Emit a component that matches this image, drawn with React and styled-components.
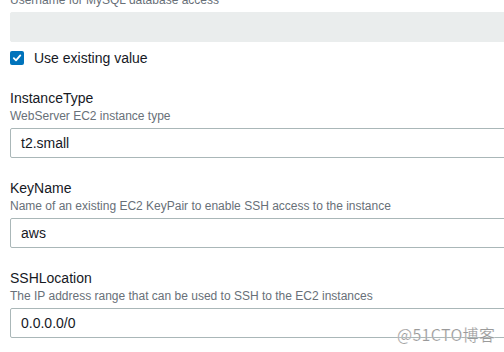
import React from "react";
import styled, { createGlobalStyle } from "styled-components";

const Global = createGlobalStyle`
  html, body { margin: 0; padding: 0; background: #ffffff; }
  body { width: 504px; height: 352px; overflow: hidden; position: relative; font-family: "Liberation Sans", Arial, sans-serif; }
`;

const Page = styled.div`
  margin-top: -8px;
  padding-left: 10px;
  display: flex;
  flex-direction: column;
`;

const Field = styled.div`
  display: flex;
  flex-direction: column;
  margin-top: ${(p) => p.$gap || 0}px;
`;

const Label = styled.div`
  font-size: 14px;
  line-height: 19px;
  color: #16191f;
`;

const Desc = styled.div`
  font-size: 12px;
  line-height: 16px;
  color: #687078;
`;

const Input = styled.div`
  box-sizing: border-box;
  margin-top: 4px;
  width: 530px;
  height: 30px;
  padding: 0 10px;
  display: flex;
  align-items: center;
  font-size: 14px;
  color: #16191f;
  background: ${(p) => (p.$disabled ? "#eaeded" : "#ffffff")};
  border: 1px solid ${(p) => (p.$disabled ? "#eaeded" : "#aab7b8")};
  border-radius: 2px;
`;

const CheckRow = styled.label`
  margin-top: 6px;
  height: 20px;
  display: flex;
  align-items: center;
  gap: 10px;
  font-size: 14px;
  color: #16191f;
`;

const Box = styled.span`
  width: 14px;
  height: 14px;
  border-radius: 2px;
  background: #0073bb;
  display: flex;
  align-items: center;
  justify-content: center;
`;

const Watermark = styled.div`
  position: absolute;
  left: 397px;
  top: 324px;
  font-family: "Noto Sans CJK SC", "Liberation Sans", sans-serif;
  font-size: 16px;
  line-height: 20px;
  color: #9a9a9a;
  letter-spacing: 0.3px;
  -webkit-text-stroke: 0.2px #ffffff;
`;

export default function App() {
  return (
    <>
      <Global />
      <Page>
        <Desc>Username for MySQL database access</Desc>
        <Input $disabled />
        <CheckRow>
          <Box>
            <svg width="10" height="10" viewBox="0 0 10 10">
              <path d="M1.8 5.2 L4 7.4 L8.3 2.4" fill="none" stroke="#fff" strokeWidth="1.8" strokeLinecap="round" strokeLinejoin="round" />
            </svg>
          </Box>
          Use existing value
        </CheckRow>
        <Field $gap={21}>
          <Label>InstanceType</Label>
          <Desc>WebServer EC2 instance type</Desc>
          <Input>t2.small</Input>
        </Field>
        <Field $gap={21}>
          <Label>KeyName</Label>
          <Desc>Name of an existing EC2 KeyPair to enable SSH access to the instance</Desc>
          <Input>aws</Input>
        </Field>
        <Field $gap={21}>
          <Label>SSHLocation</Label>
          <Desc>The IP address range that can be used to SSH to the EC2 instances</Desc>
          <Input>0.0.0.0/0</Input>
        </Field>
      </Page>
      <Watermark>@51CTO博客</Watermark>
    </>
  );
}
